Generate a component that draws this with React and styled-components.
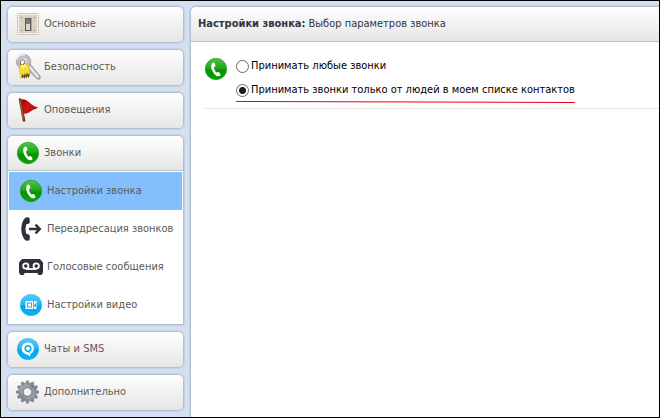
import React, { useState } from "react";
import styled, { createGlobalStyle } from "styled-components";

const GlobalStyle = createGlobalStyle`
  * {
    box-sizing: border-box;
  }
  body {
    margin: 0;
    font-family: "DejaVu Sans Condensed", "Noto Sans", sans-serif;
    font-size: 11px;
    line-height: 16px;
    color: #000;
  }
`;

const Window = styled.div`
  display: flex;
  gap: 6px;
  min-height: 100vh;
  padding: 5px 0 0 6px;
  border: 1px solid #000;
  background: #d3e0f1;
  overflow: hidden;
`;

const Sidebar = styled.nav`
  display: flex;
  flex-direction: column;
  gap: 6px;
  width: 177px;
  flex-shrink: 0;
  padding-bottom: 5px;
`;

const Section = styled.div`
  border: 1px solid #b4bfcf;
  border-radius: ${props => (props.$open ? "6px 6px 1px 1px" : "6px")};
  background: #fff;
  box-shadow: 0 0 1px 1px #c3d0e0;
  overflow: hidden;
`;

const SectionButton = styled.button`
  display: flex;
  align-items: center;
  gap: 5px;
  width: 100%;
  height: 35px;
  padding: ${props => (props.$open ? "0 9px" : "0 9px 1px")};
  border: 0;
  border-bottom: ${props => (props.$open ? "1px solid #bfbfbf" : "0")};
  background: linear-gradient(#fefefe, #e6e6e6);
  font: inherit;
  color: #5a5a5a;
  text-align: left;
  white-space: nowrap;
`;

const SubList = styled.ul`
  margin: 0;
  padding: 1px 1px 0;
  list-style: none;
`;

const SubButton = styled.button`
  display: flex;
  align-items: center;
  gap: 5px;
  width: 100%;
  height: 38px;
  padding: 0 11px;
  border: 0;
  background: ${props => (props.$active ? "#84bffd" : "#fff")};
  font: inherit;
  color: #5a5a5a;
  text-align: left;
  white-space: nowrap;
`;

const Icon = styled.svg`
  display: block;
  width: 22px;
  height: 22px;
  flex-shrink: 0;
  overflow: visible;
`;

const Panel = styled.main`
  flex: 1;
  min-width: 0;
  border: 1px solid #b4bfcf;
  border-width: 1px 0 0 1px;
  border-radius: 6px 0 0 0;
  background: #fff;
  box-shadow: 0 0 1px 1px #c3d0e0;
  overflow: hidden;
`;

const PanelHeader = styled.header`
  display: flex;
  align-items: center;
  gap: 3px;
  height: 35px;
  padding: 0 7px;
  border-bottom: 1px solid #c0c0c0;
  background: linear-gradient(#fefefe, #e6e6e6);
  color: #33333f;
  white-space: nowrap;
`;

const Title = styled.h1`
  margin: 0;
  font-size: 11px;
  font-weight: bold;
`;

const Settings = styled.section`
  display: flex;
  align-items: flex-start;
  gap: 9px;
  margin-left: 14px;
  padding: 16px 0 4px;
  border-bottom: 1px solid #e2e2e2;
`;

const Options = styled.div`
  display: flex;
  flex-direction: column;
  align-items: flex-start;
  gap: 8px;
`;

const Option = styled.label`
  display: flex;
  align-items: center;
  gap: 2px;
  white-space: nowrap;
`;

const Radio = styled.input`
  appearance: none;
  width: 13px;
  height: 13px;
  margin: 0;
  border: 1px solid #6a6a6a;
  border-radius: 50%;
  background: #fff;
  &:checked {
    background: radial-gradient(circle, #1c1c1c 3px, #fff 4px);
  }
`;

const Underline = styled.svg`
  display: block;
  width: 100%;
  height: 3px;
  margin-top: 3px;
`;

const CallIcon = () => (
  <Icon viewBox="0 0 22 22" aria-hidden="true">
    <defs>
      <linearGradient id="call" x1="0" y1="0" x2="0" y2="1">
        <stop offset="0" stopColor="#55c24b" />
        <stop offset="0.48" stopColor="#1ba616" />
        <stop offset="0.55" stopColor="#039400" />
        <stop offset="1" stopColor="#08a205" />
      </linearGradient>
    </defs>
    <circle cx="11" cy="11" r="10.7" fill="url(#call)" stroke="#10930c" strokeWidth="0.6" />
    <path
      d="M7.2 5.2C8 4.300 9.300 4.300 9.700 5.300l.7 2c.2.9-.3 1.500-1.400 1.800-.1 2 1 4.300 2.800 5.600.8-.8 1.800-.9 2.400-.3l1.100 1.500c.5.8.1 1.700-.9 2.100-1.500.6-3.500-.3-5-2.100C7.400 13.600 6.200 11.200 6.200 8.500c0-1.500.3-2.600 1-3.300z"
      fill="#fff"
    />
  </Icon>
);

const SwitchIcon = () => (
  <Icon viewBox="0 0 22 22" aria-hidden="true">
    <rect x="0.5" y="0.5" width="21" height="21" rx="1" fill="#f7f4ee" stroke="#cbc3b6" />
    <rect x="2" y="2" width="18" height="18" fill="#d9d1c4" />
    <path d="M4 4h1v1H4zM17 4h1v1h-1zM4 17h1v1H4zM17 17h1v1h-1z" fill="#81786c" />
    <rect x="8" y="5" width="6" height="13" fill="#5d5a58" />
    <rect x="9" y="9" width="4" height="8" fill="#d6d6d8" />
    <path d="M9 6h4v5H9z" fill="#7e7b79" />
    <path d="M14.500 5v13" stroke="#aaa197" />
  </Icon>
);

const KeysIcon = () => (
  <Icon viewBox="0 0 22 22" aria-hidden="true">
    <path d="M10 9l3-1 10 12v3h-3l-1-2-2-1-1-2-2-1-1-2z" fill="#c6c6c6" stroke="#808080" strokeWidth="0.8" />
    <path d="M12 10l9 11" stroke="#f5f5f5" strokeWidth="1.200" />
    <circle cx="6.500" cy="5.500" r="5.200" fill="none" stroke="#bdbdbd" strokeWidth="4" />
    <circle cx="6.500" cy="5.500" r="7.300" fill="none" stroke="#929292" strokeWidth="0.7" />
    <path d="M0 4c0-3 4-6 8-5" fill="none" stroke="#ededed" strokeWidth="1.500" />
    <path d="M3 9l5-2 4 3 1 10-9 2-2-11z" fill="#f8d936" stroke="#dfb51d" strokeWidth="0.6" />
    <path d="M4 10l4-2 2 2-5 3z" fill="#fff08c" />
    <path d="M5 22l.5-3 2 2.500.5-3 1.500 2.500.5-3 1.500 2.500.500-3" fill="none" stroke="#5b4708" strokeWidth="1.100" />
    <path d="M4 9c-2-4 1-6 3-5s1 3-1 5" fill="none" stroke="#555" />
  </Icon>
);

const FlagIcon = () => (
  <Icon viewBox="0 0 22 22" aria-hidden="true">
    <defs>
      <linearGradient id="flag" x1="0" y1="0" x2="1" y2="1">
        <stop offset="0" stopColor="#a60000" />
        <stop offset="0.5" stopColor="#d91414" />
        <stop offset="1" stopColor="#9b0000" />
      </linearGradient>
    </defs>
    <path d="M4 1c3-1 5 0 8 2.500s5 4.500 8.500 5c-2 1.500-4 1.500-6 3s-4 3-8 3z" fill="url(#flag)" stroke="#970808" strokeWidth="0.5" />
    <path d="M3 .5L7 21.500" stroke="#6d3b12" strokeWidth="2.600" strokeLinecap="round" />
    <path d="M2.800 1L6.500 20" stroke="#b7793f" strokeWidth="0.7" />
  </Icon>
);

const ForwardIcon = () => (
  <Icon viewBox="0 0 22 22" aria-hidden="true">
    <path
      d="M5 0C6-.9 8.800-1 9.500.3l.4 3.200c-.2 2-1.600 2.800-3.400 2.500-1.300 3-1.300 7 0 10 1.800-.3 3.200.5 3.400 2.500l-.3 3.200c-.7 1.300-3.500 1.500-4.600.3C0 16.500 0 5.500 5 0z"
      fill="#303038"
    />
    <path d="M9 11h10M15.500 6.700l4.300 4.300-4.300 4.300" fill="none" stroke="#303038" strokeWidth="2.400" />
  </Icon>
);

const VoicemailIcon = () => (
  <Icon viewBox="0 0 22 22" aria-hidden="true">
    <path
      d="M2 3.500h18l2.500 3v10l-1 2h-3l-1-2h-13l-1 2h-3l-1-2v-10z"
      fill="#303038"
      stroke="#303038"
      strokeLinejoin="round"
    />
    <g fill="none" stroke="#fff" strokeWidth="1.800">
      <circle cx="5.800" cy="10" r="2.700" />
      <circle cx="16.200" cy="10" r="2.700" />
      <path d="M6 13h10" />
    </g>
  </Icon>
);

const BlueDisc = () => (
  <>
    <defs>
      <linearGradient id="blue" x1="0" y1="0" x2="0" y2="1">
        <stop offset="0" stopColor="#5bcaf6" />
        <stop offset="0.48" stopColor="#25b5f1" />
        <stop offset="0.55" stopColor="#00a5ed" />
        <stop offset="1" stopColor="#08b5f7" />
      </linearGradient>
    </defs>
    <circle cx="11" cy="11" r="10.800" fill="url(#blue)" stroke="#27b1ea" strokeWidth="0.4" />
  </>
);

const VideoIcon = () => (
  <Icon viewBox="0 0 22 22" aria-hidden="true">
    <BlueDisc />
    <path d="M5.500 7h11v8h-11z" fill="#fff" />
    <path d="M7 8.500h5v5H7z" fill="#12aeee" />
    <path d="M8 9.500h3v3H8z" fill="#fff" />
    <path d="M13 7h.8v8H13z" fill="#12aeee" />
    <path d="M16 9v4.500l-2.300-2.200z" fill="#12aeee" />
  </Icon>
);

const ChatIcon = () => (
  <Icon viewBox="0 0 22 22" aria-hidden="true">
    <BlueDisc />
    <path d="M11 4.500a6 6 0 0 1 2.500 11.400L13 18.500l-2.700-2A6 6 0 0 1 11 4.500z" fill="#fff" />
    <circle cx="11" cy="10.500" r="2.800" fill="none" stroke="#0aa8ed" strokeWidth="1.500" />
    <path d="M11.500 13l1 2.500" stroke="#0aa8ed" />
  </Icon>
);

const GearIcon = () => (
  <Icon viewBox="0 0 22 22" aria-hidden="true">
    <defs>
      <linearGradient id="gear" x1="0" y1="0" x2="1" y2="1">
        <stop offset="0" stopColor="#a9aeb5" />
        <stop offset="0.5" stopColor="#777d86" />
        <stop offset="1" stopColor="#9ba1aa" />
      </linearGradient>
    </defs>
    <circle cx="10.500" cy="11" r="6.700" fill="none" stroke="url(#gear)" strokeWidth="5.400" />
    <g fill="#838993">
      {[0, 30, 60, 90, 120, 150, 180, 210, 240, 270, 300, 330].map(angle => (
        <path key={angle} d="M8.400 2.800l.9-3.300h2.400l.9 3.300z" transform={`rotate(${angle} 10.500 11)`} />
      ))}
    </g>
    <circle cx="10.500" cy="11" r="6" fill="none" stroke="#a5aab2" />
    <circle cx="10.500" cy="11" r="4.200" fill="#f1f1f2" stroke="#69707a" strokeWidth="0.7" />
  </Icon>
);

const callItems = [
  { name: "Настройки звонка", icon: CallIcon },
  { name: "Переадресация звонков", icon: ForwardIcon },
  { name: "Голосовые сообщения", icon: VoicemailIcon },
  { name: "Настройки видео", icon: VideoIcon }
];

const sections = [
  { name: "Основные", icon: SwitchIcon },
  { name: "Безопасность", icon: KeysIcon },
  { name: "Оповещения", icon: FlagIcon },
  { name: "Звонки", icon: CallIcon, items: callItems },
  { name: "Чаты и SMS", icon: ChatIcon },
  { name: "Дополнительно", icon: GearIcon }
];

const App = () => {
  const [active, setActive] = useState("Настройки звонка");
  const [allow, setAllow] = useState("contacts");

  return (
    <>
      <GlobalStyle />
      <Window>
        <Sidebar>
          {sections.map(({ name, icon: SectionIcon, items }) => (
            <Section key={name} $open={!!items}>
              <SectionButton type="button" $open={!!items}>
                <SectionIcon />
                {name}
              </SectionButton>
              {items && (
                <SubList>
                  {items.map(({ name: item, icon: ItemIcon }) => (
                    <li key={item}>
                      <SubButton
                        type="button"
                        $active={item === active}
                        onClick={() => setActive(item)}
                      >
                        <ItemIcon />
                        {item}
                      </SubButton>
                    </li>
                  ))}
                </SubList>
              )}
            </Section>
          ))}
        </Sidebar>
        <Panel>
          <PanelHeader>
            <Title>Настройки звонка:</Title>
            <span>Выбор параметров звонка</span>
          </PanelHeader>
          <Settings>
            <CallIcon />
            <Options>
              <Option>
                <Radio
                  type="radio"
                  name="allow"
                  checked={allow === "all"}
                  onChange={() => setAllow("all")}
                />
                Принимать любые звонки
              </Option>
              <div>
                <Option>
                  <Radio
                    type="radio"
                    name="allow"
                    checked={allow === "contacts"}
                    onChange={() => setAllow("contacts")}
                  />
                  Принимать звонки только от людей в моем списке контактов
                </Option>
                <Underline viewBox="0 0 333 3" preserveAspectRatio="none" aria-hidden="true">
                  <path d="M0 .5L333 1.500" stroke="#f00010" strokeWidth="1" />
                </Underline>
              </div>
            </Options>
          </Settings>
        </Panel>
      </Window>
    </>
  );
};

export default App;
